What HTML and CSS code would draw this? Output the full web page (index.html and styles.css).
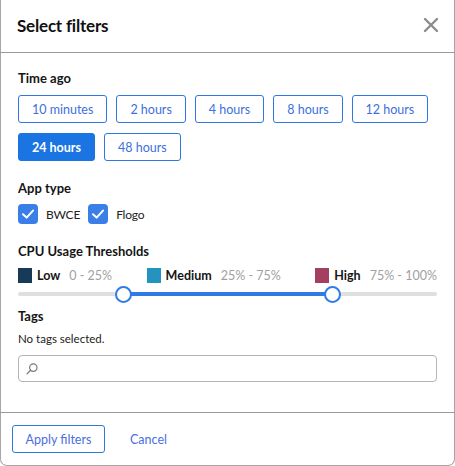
FILE: index.html
```html
<!DOCTYPE html>
<html>
<head>
<meta charset="utf-8">
<link rel="stylesheet" href="styles.css">
</head>
<body>
<div class="dialog">
  <div class="header">
    <h1 class="title">Select filters</h1>
    <button class="close" aria-label="Close">
      <svg width="16" height="16" viewBox="0 0 16 16"><path d="M2 2 L14 14 M14 2 L2 14" stroke="#8c8c8c" stroke-width="2.4" stroke-linecap="round"/></svg>
    </button>
  </div>
  <div class="body">
    <div class="label">Time ago</div>
    <div class="chips">
      <button class="chip">10 minutes</button>
      <button class="chip">2 hours</button>
      <button class="chip">4 hours</button>
      <button class="chip">8 hours</button>
      <button class="chip">12 hours</button>
      <button class="chip active">24 hours</button>
      <button class="chip">48 hours</button>
    </div>

    <div class="label section">App type</div>
    <div class="checks">
      <label class="check">
        <span class="box"><svg width="20" height="20" viewBox="0 0 20 20"><path d="M5 10.2 L8.6 13.6 L15 6.6" fill="none" stroke="#fff" stroke-width="2" stroke-linecap="round" stroke-linejoin="round"/></svg></span>
        <span>BWCE</span>
      </label>
      <label class="check">
        <span class="box"><svg width="20" height="20" viewBox="0 0 20 20"><path d="M5 10.2 L8.6 13.6 L15 6.6" fill="none" stroke="#fff" stroke-width="2" stroke-linecap="round" stroke-linejoin="round"/></svg></span>
        <span>Flogo</span>
      </label>
    </div>

    <div class="label section">CPU Usage Thresholds</div>
    <div class="legend">
      <div class="legend-item"><span class="swatch low"></span><b>Low</b><span class="range">0 - 25%</span></div>
      <div class="legend-item"><span class="swatch medium"></span><b>Medium</b><span class="range">25% - 75%</span></div>
      <div class="legend-item"><span class="swatch high"></span><b>High</b><span class="range">75% - 100%</span></div>
    </div>
    <div class="slider">
      <div class="track"></div>
      <div class="fill" style="left:25%;right:25%"></div>
      <span class="thumb" style="left:25%"></span>
      <span class="thumb" style="left:75%"></span>
    </div>

    <div class="label tags-label">Tags</div>
    <div class="note">No tags selected.</div>
    <div class="search">
      <svg width="14" height="14" viewBox="0 0 14 14"><circle cx="8.3" cy="5.6" r="3.7" fill="none" stroke="#7a7a7a" stroke-width="1.2"/><path d="M5.6 8.3 L2 11.9" stroke="#7a7a7a" stroke-width="1.3" stroke-linecap="round"/></svg>
      <input class="search-input" type="text">
    </div>
  </div>
  <div class="footer">
    <button class="apply">Apply filters</button>
    <button class="cancel">Cancel</button>
  </div>
</div>
</body>
</html>
```
FILE: styles.css
```css
* { box-sizing: border-box; }
html, body { margin: 0; padding: 0; background: #fff; }
body {
  font-family: Lato, "Open Sans", sans-serif;
  color: #151515;
  width: 455px;
  height: 466px;
}
.dialog {
  width: 455px;
  height: 466px;
  border: 1px solid #a6a6a6;
  border-top: none;
  border-radius: 0 0 7px 7px;
  display: flex;
  flex-direction: column;
}
.header {
  height: 53px;
  border-bottom: 1px solid #9a9a9a;
  display: flex;
  align-items: center;
  justify-content: space-between;
  padding: 0 16px 0 17px;
  margin: 0 -1px;
}
.title {
  margin: 0;
  font-size: 17px;
  font-weight: 700;
  letter-spacing: -0.2px;
  color: #111;
  position: relative;
  top: -1px;
}
.close {
  border: none;
  background: none;
  padding: 0;
  width: 16px;
  height: 16px;
  display: flex;
  position: relative;
  top: -1px;
}
.body {
  padding: 15px 17px 0 17px;
}
.label {
  font-size: 13px;
  font-weight: 700;
  line-height: 20px;
  color: #151515;
}
.section { margin-top: 17px; }
.chips {
  display: flex;
  flex-wrap: wrap;
  gap: 10px 9px;
  margin-top: 7px;
}
.chip {
  height: 28px;
  padding: 0 13px;
  font-family: inherit;
  font-size: 12.5px;
  color: #3d6fe0;
  background: #fff;
  border: 1px solid #2d78e4;
  border-radius: 3px;
}
.chip.active {
  background: #1a74e2;
  border-color: #1a74e2;
  color: #fff;
  font-weight: 700;
}
.checks {
  display: flex;
  gap: 8px;
  margin-top: 6px;
  height: 20px;
}
.check {
  display: flex;
  align-items: center;
  gap: 8px;
  font-size: 12px;
  letter-spacing: -0.2px;
  color: #222;
}
.box {
  width: 20px;
  height: 20px;
  border-radius: 4px;
  background: #3a7fe8;
  display: flex;
}
.legend {
  display: flex;
  justify-content: space-between;
  margin-top: 6px;
  height: 16px;
  align-items: center;
}
.legend-item {
  display: flex;
  align-items: center;
  font-size: 12.5px;
}
.legend-item b { font-weight: 700; margin-left: 5px; color: #151515; }
.range { color: #a0a0a0; margin-left: 9px; }
.swatch { width: 14px; height: 15px; display: block; }
.swatch.low { background: #163a58; }
.swatch.medium { background: #2494bf; }
.swatch.high { background: #a3405f; }
.slider {
  position: relative;
  height: 22px;
  margin-top: 0;
}
.track {
  position: absolute;
  left: 0; right: 0;
  top: 9px;
  height: 4px;
  background: #dedfe1;
  border-radius: 2px;
}
.fill {
  position: absolute;
  top: 9px;
  height: 4px;
  background: #2e7ae6;
}
.thumb {
  position: absolute;
  top: 3px;
  width: 17px;
  height: 17px;
  margin-left: -8px;
  border-radius: 50%;
  background: #fff;
  border: 2px solid #2f7be6;
}
.tags-label { margin-top: 1px; }
.note {
  font-size: 11.5px;
  line-height: 18px;
  margin-top: 4px;
  color: #222;
}
.search {
  margin-top: 7px;
  height: 27px;
  border: 1px solid #b5b5b5;
  border-radius: 4px;
  display: flex;
  align-items: center;
  padding-left: 6px;
}
.search-input {
  border: none;
  outline: none;
  flex: 1;
  height: 24px;
  background: transparent;
}
.footer {
  margin-top: auto;
  border-top: 1px solid #9a9a9a;
  height: 53px;
  display: flex;
  align-items: center;
  padding: 0 0 0 12px;
  gap: 0;
  margin-left: -1px;
  margin-right: -1px;
}
.apply {
  height: 28px;
  width: 93px;
  font-family: inherit;
  font-size: 12.5px;
  color: #4b6ee0;
  background: #fff;
  border: 1px solid #2d78e4;
  border-radius: 3px;
}
.cancel {
  margin-left: 25px;
  border: none;
  background: none;
  padding: 0;
  font-family: inherit;
  font-size: 12.5px;
  color: #4b6ee0;
}
```
